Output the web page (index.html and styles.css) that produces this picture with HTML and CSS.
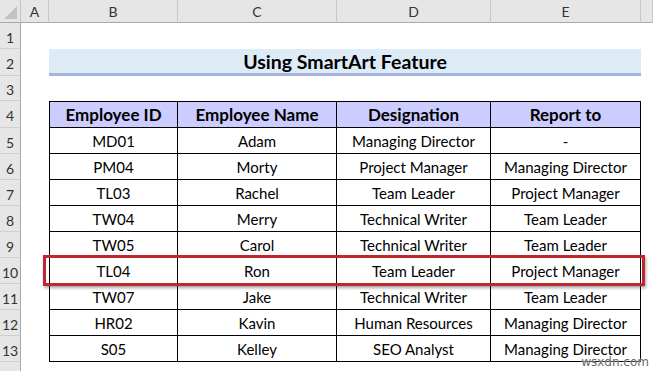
FILE: index.html
```html
<!DOCTYPE html>
<html lang="en">
<head>
  <meta charset="UTF-8">
  <title>Using SmartArt Feature</title>
  <link rel="stylesheet" href="styles.css">
</head>
<body>
  <div class="sheet">
    <!-- column headers -->
    <div class="corner"><span class="tri"></span></div>
    <div class="col-head">A</div>
    <div class="col-head">B</div>
    <div class="col-head">C</div>
    <div class="col-head">D</div>
    <div class="col-head">E</div>
    <div class="col-head"></div>

    <!-- row 1 -->
    <div class="row-head">1</div>
    <div class="blank span-all"></div>

    <!-- row 2 -->
    <div class="row-head">2</div>
    <div class="blank"></div>
    <div class="title">Using SmartArt Feature</div>
    <div class="blank"></div>

    <!-- row 3 -->
    <div class="row-head">3</div>
    <div class="blank span-all"></div>

    <!-- row 4 -->
    <div class="row-head">4</div>
    <div class="blank"></div>
    <div class="cell th first">Employee ID</div>
    <div class="cell th">Employee Name</div>
    <div class="cell th">Designation</div>
    <div class="cell th">Report to</div>
    <div class="blank"></div>

    <div class="row-head">5</div>
    <div class="blank"></div>
    <div class="cell first">MD01</div>
    <div class="cell">Adam</div>
    <div class="cell">Managing Director</div>
    <div class="cell">-</div>
    <div class="blank"></div>

    <div class="row-head">6</div>
    <div class="blank"></div>
    <div class="cell first">PM04</div>
    <div class="cell">Morty</div>
    <div class="cell">Project Manager</div>
    <div class="cell">Managing Director</div>
    <div class="blank"></div>

    <div class="row-head">7</div>
    <div class="blank"></div>
    <div class="cell first">TL03</div>
    <div class="cell">Rachel</div>
    <div class="cell">Team Leader</div>
    <div class="cell">Project Manager</div>
    <div class="blank"></div>

    <div class="row-head">8</div>
    <div class="blank"></div>
    <div class="cell first">TW04</div>
    <div class="cell">Merry</div>
    <div class="cell">Technical Writer</div>
    <div class="cell">Team Leader</div>
    <div class="blank"></div>

    <div class="row-head">9</div>
    <div class="blank"></div>
    <div class="cell first">TW05</div>
    <div class="cell">Carol</div>
    <div class="cell">Technical Writer</div>
    <div class="cell">Team Leader</div>
    <div class="blank"></div>

    <div class="row-head">10</div>
    <div class="blank"></div>
    <div class="cell first">TL04</div>
    <div class="cell">Ron</div>
    <div class="cell">Team Leader</div>
    <div class="cell">Project Manager</div>
    <div class="blank"></div>

    <div class="row-head">11</div>
    <div class="blank"></div>
    <div class="cell first">TW07</div>
    <div class="cell">Jake</div>
    <div class="cell">Technical Writer</div>
    <div class="cell">Team Leader</div>
    <div class="blank"></div>

    <div class="row-head">12</div>
    <div class="blank"></div>
    <div class="cell first">HR02</div>
    <div class="cell">Kavin</div>
    <div class="cell">Human Resources</div>
    <div class="cell">Managing Director</div>
    <div class="blank"></div>

    <div class="row-head">13</div>
    <div class="blank"></div>
    <div class="cell first">S05</div>
    <div class="cell">Kelley</div>
    <div class="cell">SEO Analyst</div>
    <div class="cell">Managing Director</div>
    <div class="blank"></div>

    <div class="row-head last"></div>
    <div class="blank span-all"></div>

    <!-- highlight around row 10 -->
    <div class="highlight"></div>
    <div class="watermark">wsxdn.com</div>
  </div>
</body>
</html>
```

FILE: styles.css
```css
* {
  margin: 0;
  padding: 0;
  box-sizing: border-box;
}

body {
  font-family: 'Lato', 'Open Sans', sans-serif;
  background: #fff;
  width: 653px;
  height: 371px;
  overflow: hidden;
}

.sheet {
  position: relative;
  display: grid;
  grid-template-columns: 21px 28px 129px 159px 154px 150px 1fr;
  grid-template-rows: 23px 26px 27px 25px 27px repeat(9, 26px) 1fr;
  height: 371px;
}

.corner {
  position: relative;
  background: #e6e6e6;
  border-right: 1px solid #c4c4c4;
  border-bottom: 1px solid #a8a8a8;
}

.tri {
  position: absolute;
  right: 3px;
  bottom: 3px;
  width: 0;
  height: 0;
  border-left: 13px solid transparent;
  border-bottom: 13px solid #c2c2c2;
}

.col-head {
  background: #e6e6e6;
  border-right: 1px solid #c8c8c8;
  border-bottom: 1px solid #a8a8a8;
  color: #333;
  font-size: 14px;
  display: flex;
  align-items: center;
  justify-content: center;
}

.col-head:last-of-type {
  border-right: none;
}

.row-head {
  background: #e6e6e6;
  border-right: 1px solid #a8a8a8;
  border-bottom: 1px solid #cfcfcf;
  color: #333;
  font-size: 14px;
  display: flex;
  align-items: center;
  justify-content: center;
  padding-top: 3px;
}

.row-head.last {
  border-bottom: none;
}

.span-all {
  grid-column: 2 / 8;
}

.title {
  grid-column: 3 / 7;
  background: #ddebf7;
  border-bottom: 3px solid #a3b5da;
  font-weight: 700;
  font-size: 19.5px;
  color: #000;
  display: flex;
  align-items: center;
  justify-content: center;
  padding-top: 1px;
}

.cell {
  border-right: 1px solid #000;
  border-bottom: 1px solid #000;
  font-size: 15px;
  color: #000;
  display: flex;
  align-items: center;
  justify-content: center;
  white-space: nowrap;
}

.cell.first {
  border-left: 1px solid #000;
}

.th {
  background: #ccccff;
  border-top: 1px solid #000;
  font-weight: 700;
  font-size: 17px;
}

.highlight {
  position: absolute;
  left: 43px;
  top: 255px;
  width: 602px;
  height: 31px;
  border: 3px solid #c0272d;
  box-shadow: 1px 2px 3px rgba(0, 0, 0, 0.35);
}

.watermark {
  position: absolute;
  right: 4px;
  bottom: 2px;
  font-family: 'DejaVu Sans', sans-serif;
  font-size: 12px;
  color: #6a6a6a;
  text-shadow: 0 0 2px #fff;
}
```
